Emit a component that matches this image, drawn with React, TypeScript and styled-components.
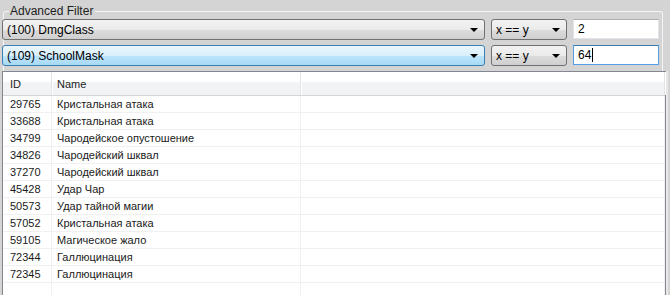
import React from "react";
import styled, { createGlobalStyle, css } from "styled-components";

const GlobalStyle = createGlobalStyle`
  html, body {
    margin: 0;
    padding: 0;
    background: #d4d4d4;
    font-family: "Liberation Sans", Arial, sans-serif;
    font-size: 12px;
    color: #000;
    overflow: hidden;
  }
`;

const Page = styled.div`
  width: 670px;
  height: 295px;
  overflow: hidden;
  box-sizing: border-box;
`;

const Group = styled.fieldset`
  margin: 4px 7px 0 3px;
  padding: 1px 0 5px 0;
  border: 1px solid #f4f4f4;
  border-bottom: none;
  border-radius: 3px 3px 0 0;
  min-width: 0;
`;

const Legend = styled.legend`
  margin-left: 5px;
  padding: 0 2px 0 1px;
  font-size: 12px;
  line-height: 14px;
  color: #1e1e1e;
`;

const FilterRow = styled.div`
  display: grid;
  grid-template-columns: 483px 76px 86px;
  column-gap: 6px;
  margin-left: -2px;
  height: 21px;
  & + & {
    margin-top: 5px;
  }
`;

const Combo = styled.div<{ $hot?: boolean }>`
  position: relative;
  display: flex;
  align-items: center;
  box-sizing: border-box;
  height: 21px;
  padding: 0 20px 0 4px;
  border: 1px solid #707070;
  border-radius: 3px;
  background: linear-gradient(#f2f2f2 0%, #ebebeb 50%, #dddddd 50%, #cfcfcf 100%);
  white-space: nowrap;
  ${(p) =>
    p.$hot &&
    css`
      border-color: #3c7fb1;
      background: linear-gradient(#eaf6fd 0%, #d9f0fc 50%, #bee6fd 50%, #a7d9f5 100%);
    `}
`;

const Arrow = styled.span`
  position: absolute;
  right: 6px;
  top: 8px;
  width: 0;
  height: 0;
  border-left: 4px solid transparent;
  border-right: 4px solid transparent;
  border-top: 4px solid #000;
`;

const TextBox = styled.div<{ $focus?: boolean }>`
  display: flex;
  align-items: center;
  box-sizing: border-box;
  height: 20px;
  padding: 0 4px;
  background: #fff;
  border: 1px solid #e2e3ea;
  border-top-color: #abadb3;
  ${(p) =>
    p.$focus &&
    css`
      border-color: #569de5;
      border-top-color: #3d7bad;
    `}
`;

const Caret = styled.span`
  display: inline-block;
  width: 1px;
  height: 14px;
  background: #000;
  margin-left: 1px;
`;

const List = styled.div`
  margin: 0 4px 0 2px;
  border: 1px solid #828790;
  border-bottom: none;
  background: #fff;
  height: 230px;
  box-shadow: 2px 0 0 #e8e8e8;
  font-size: 11px;
`;

const cols = "49px 249px 1fr";

const Header = styled.div`
  display: grid;
  grid-template-columns: ${cols};
  height: 24px;
  background: linear-gradient(#ffffff 0%, #ffffff 42%, #f3f4f6 42%, #f1f2f4 100%);
  border-bottom: 1px solid #d5d5d5;
  box-sizing: border-box;
`;

const HeadCell = styled.div<{ $pad?: number }>`
  display: flex;
  align-items: center;
  padding-left: ${(p) => p.$pad ?? 7}px;
  border-right: 1px solid #e3e4e6;
  box-shadow: 1px 0 0 #ffffff;
  color: #1e1e1e;
`;

const Row = styled.div`
  display: grid;
  grid-template-columns: ${cols};
  height: 17px;
  border-bottom: 1px solid #f0f0f0;
  box-sizing: border-box;
`;

const Cell = styled.div<{ $pad?: number }>`
  display: flex;
  align-items: center;
  padding-left: ${(p) => p.$pad ?? 7}px;
  border-right: 1px solid #f0f0f0;
  white-space: nowrap;
  color: #1a1a1a;
`;

const spells: [string, string][] = [
  ["29765", "Кристальная атака"],
  ["33688", "Кристальная атака"],
  ["34799", "Чародейское опустошение"],
  ["34826", "Чародейский шквал"],
  ["37270", "Чародейский шквал"],
  ["45428", "Удар Чар"],
  ["50573", "Удар тайной магии"],
  ["57052", "Кристальная атака"],
  ["59105", "Магическое жало"],
  ["72344", "Галлюцинация"],
  ["72345", "Галлюцинация"],
  ["", ""],
];

export default function App() {
  return (
    <Page>
      <GlobalStyle />
      <Group>
        <Legend>Advanced Filter</Legend>
        <FilterRow>
          <Combo>
            (100) DmgClass
            <Arrow />
          </Combo>
          <Combo>
            x == y
            <Arrow />
          </Combo>
          <TextBox>2</TextBox>
        </FilterRow>
        <FilterRow>
          <Combo $hot>
            (109) SchoolMask
            <Arrow />
          </Combo>
          <Combo>
            x == y
            <Arrow />
          </Combo>
          <TextBox $focus>
            64
            <Caret />
          </TextBox>
        </FilterRow>
      </Group>
      <List>
        <Header>
          <HeadCell>ID</HeadCell>
          <HeadCell $pad={5}>Name</HeadCell>
          <HeadCell />
        </Header>
        {spells.map(([id, name], i) => (
          <Row key={i}>
            <Cell>{id}</Cell>
            <Cell $pad={5}>{name}</Cell>
            <Cell />
          </Row>
        ))}
      </List>
    </Page>
  );
}
